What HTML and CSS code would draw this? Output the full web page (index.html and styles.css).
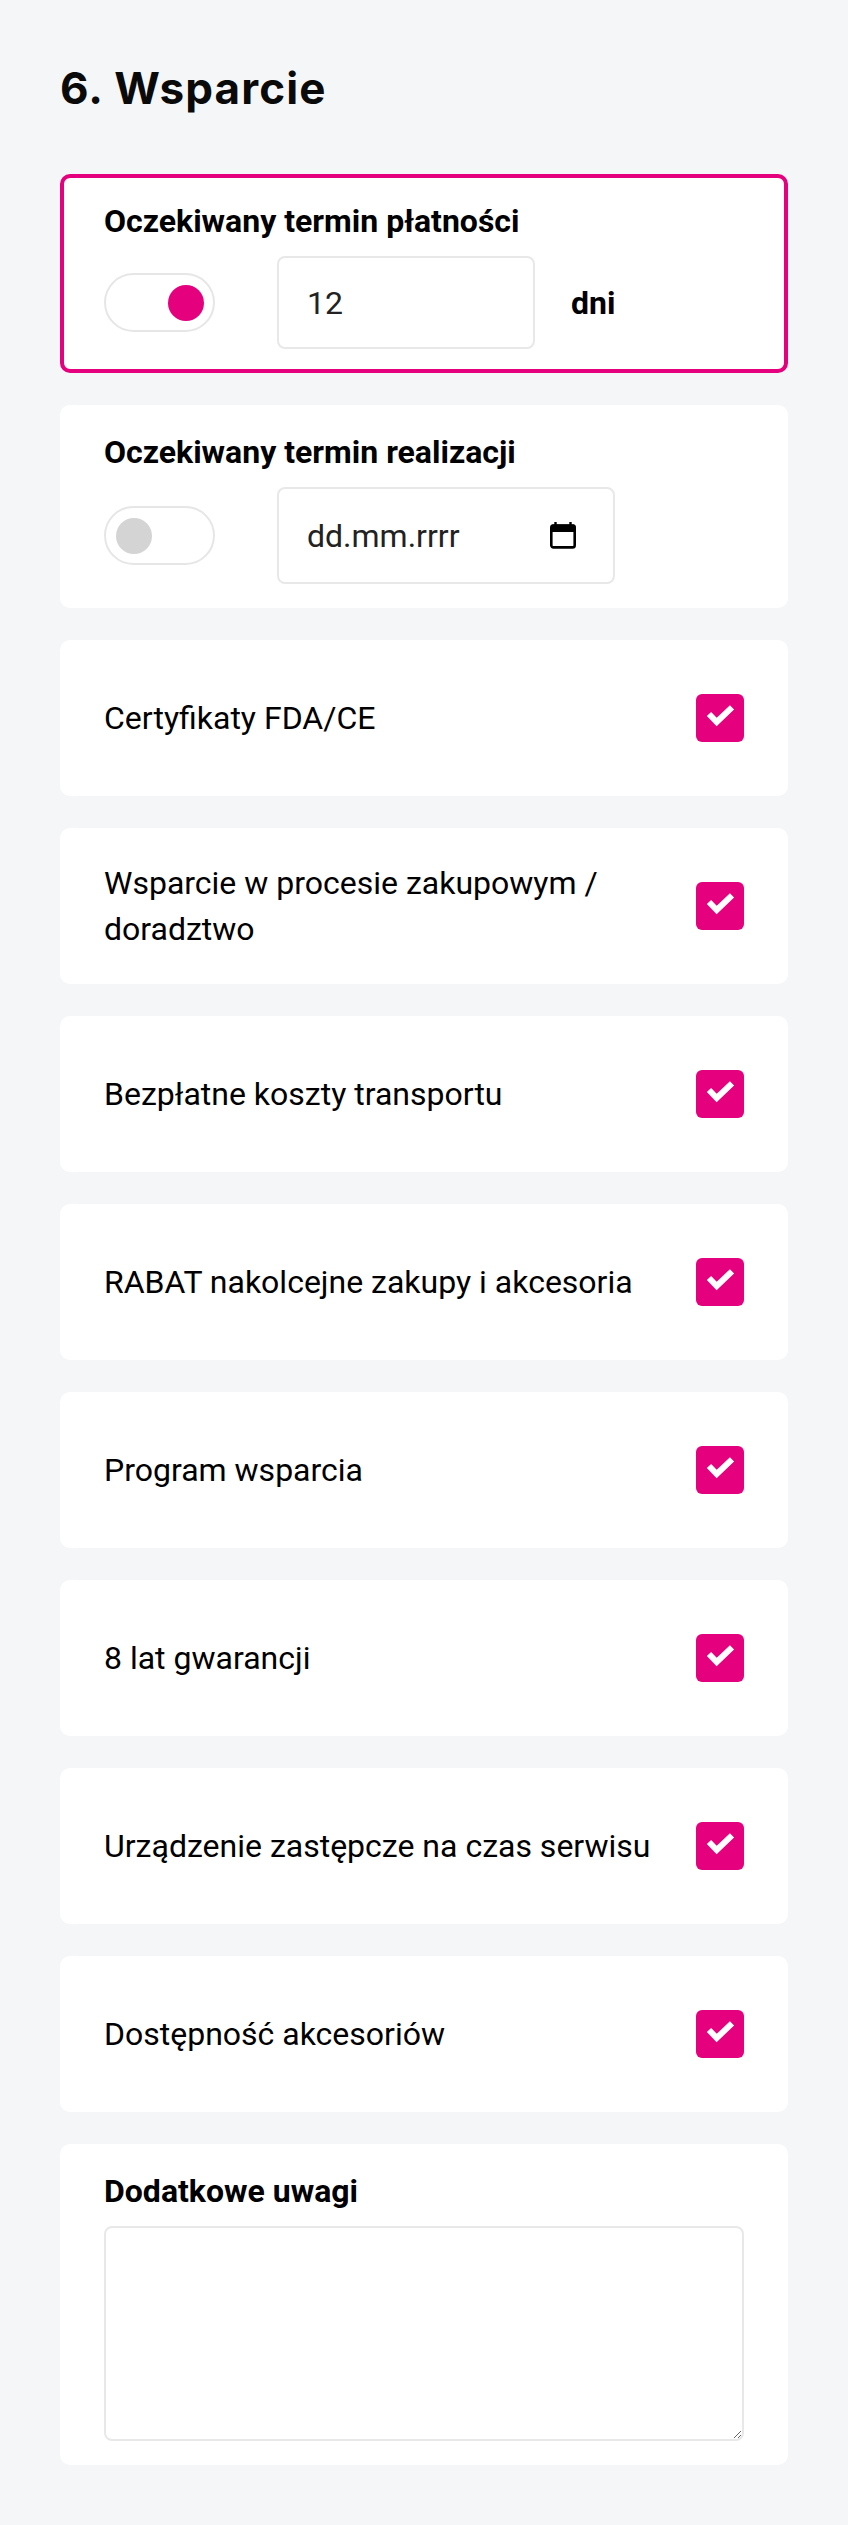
FILE: index.html
```html
<!DOCTYPE html>
<html lang="pl">
<head>
  <meta charset="UTF-8">
  <title>Wsparcie</title>
  <link rel="stylesheet" href="styles.css">
</head>
<body>
  <div class="page">
    <h1 class="section-title">6. Wsparcie</h1>

    <div class="cards">
      <!-- Payment term (active) -->
      <div class="card card-active">
        <p class="card-label">Oczekiwany termin płatności</p>
        <div class="card-row">
          <span class="switch switch-on"><span class="switch-knob"></span></span>
          <input class="field field-number" type="text" value="12">
          <span class="unit">dni</span>
        </div>
      </div>

      <!-- Delivery term -->
      <div class="card">
        <p class="card-label">Oczekiwany termin realizacji</p>
        <div class="card-row">
          <span class="switch"><span class="switch-knob"></span></span>
          <label class="field field-date">
            <input type="text" placeholder="dd.mm.rrrr">
            <svg class="calendar-icon" width="26" height="27" viewBox="0 0 26 27">
              <rect x="4.3" y="0" width="2.4" height="4" fill="#000"/>
              <rect x="19.3" y="0" width="2.4" height="4" fill="#000"/>
              <rect x="1.3" y="3.6" width="23.4" height="21.8" rx="2.2" fill="none" stroke="#000" stroke-width="2.6"/>
              <rect x="0.5" y="2.4" width="25" height="7.6" rx="1.5" fill="#000"/>
            </svg>
          </label>
        </div>
      </div>

      <label class="card check-card">
        <span class="check-text">Certyfikaty FDA/CE</span>
        <span class="check-box"><svg width="48" height="48" viewBox="0 0 48 48"><polyline points="13,20 20.7,28 36,13.3" fill="none" stroke="#fff" stroke-width="6"/></svg></span>
      </label>

      <label class="card check-card">
        <span class="check-text">Wsparcie w procesie zakupowym / doradztwo</span>
        <span class="check-box"><svg width="48" height="48" viewBox="0 0 48 48"><polyline points="13,20 20.7,28 36,13.3" fill="none" stroke="#fff" stroke-width="6"/></svg></span>
      </label>

      <label class="card check-card">
        <span class="check-text">Bezpłatne koszty transportu</span>
        <span class="check-box"><svg width="48" height="48" viewBox="0 0 48 48"><polyline points="13,20 20.7,28 36,13.3" fill="none" stroke="#fff" stroke-width="6"/></svg></span>
      </label>

      <label class="card check-card">
        <span class="check-text">RABAT nakolcejne zakupy i akcesoria</span>
        <span class="check-box"><svg width="48" height="48" viewBox="0 0 48 48"><polyline points="13,20 20.7,28 36,13.3" fill="none" stroke="#fff" stroke-width="6"/></svg></span>
      </label>

      <label class="card check-card">
        <span class="check-text">Program wsparcia</span>
        <span class="check-box"><svg width="48" height="48" viewBox="0 0 48 48"><polyline points="13,20 20.7,28 36,13.3" fill="none" stroke="#fff" stroke-width="6"/></svg></span>
      </label>

      <label class="card check-card">
        <span class="check-text">8 lat gwarancji</span>
        <span class="check-box"><svg width="48" height="48" viewBox="0 0 48 48"><polyline points="13,20 20.7,28 36,13.3" fill="none" stroke="#fff" stroke-width="6"/></svg></span>
      </label>

      <label class="card check-card">
        <span class="check-text">Urządzenie zastępcze na czas serwisu</span>
        <span class="check-box"><svg width="48" height="48" viewBox="0 0 48 48"><polyline points="13,20 20.7,28 36,13.3" fill="none" stroke="#fff" stroke-width="6"/></svg></span>
      </label>

      <label class="card check-card">
        <span class="check-text">Dostępność akcesoriów</span>
        <span class="check-box"><svg width="48" height="48" viewBox="0 0 48 48"><polyline points="13,20 20.7,28 36,13.3" fill="none" stroke="#fff" stroke-width="6"/></svg></span>
      </label>

      <!-- Notes -->
      <div class="card">
        <p class="card-label">Dodatkowe uwagi</p>
        <textarea class="notes"></textarea>
      </div>
    </div>
  </div>
</body>
</html>
```

FILE: styles.css
```css
body {
  margin: 0;
  background-color: #f5f6f8;
  font-family: Roboto, "Noto Sans", sans-serif;
  color: #000;
}

.page {
  padding: 61px 60px 58px;
}

.section-title {
  font-family: Inter, "Noto Sans", sans-serif;
  font-size: 44px;
  font-weight: 700;
  letter-spacing: 1.1px;
  margin: 0 0 59px;
  color: #0a0a0a;
}

.cards {
  display: flex;
  flex-direction: column;
  gap: 32px;
}

.card {
  background-color: #fff;
  border: 4px solid transparent;
  border-radius: 10px;
  padding: 24px 40px 20px;
}

.card-active {
  border-color: #e5007e;
}

.card-label {
  margin: 0 0 16px;
  font-size: 32px;
  line-height: 38px;
  font-weight: 700;
}

.card-row {
  display: flex;
  align-items: center;
}

/* Toggle */
.switch {
  display: flex;
  align-items: center;
  box-sizing: border-box;
  width: 111px;
  height: 59px;
  padding: 0 10px;
  border: 2px solid #e6e6e6;
  border-radius: 30px;
  margin-right: 62px;
}

.switch-knob {
  width: 36px;
  height: 36px;
  border-radius: 50%;
  background-color: #d4d4d4;
}

.switch-on {
  justify-content: flex-end;
  padding-right: 9px;
}

.switch-on .switch-knob {
  background-color: #e5007e;
}

/* Inputs */
.field {
  box-sizing: border-box;
  border: 2px solid #e8e8e8;
  border-radius: 8px;
  background-color: #fff;
  font-family: Roboto, sans-serif;
  font-size: 32px;
  color: #222;
  padding: 0 28px;
  outline: none;
}

.field-number {
  width: 258px;
  height: 93px;
}

.field-date {
  display: flex;
  align-items: center;
  width: 338px;
  height: 97px;
  padding-right: 37px;
}

.field-date input {
  flex: 1;
  min-width: 0;
  border: 0;
  padding: 0;
  outline: none;
  font: inherit;
  color: #222;
}

.field-date input::placeholder {
  color: #222;
  opacity: 1;
}

.calendar-icon {
  flex-shrink: 0;
}

.unit {
  margin-left: 36px;
  font-size: 32px;
  font-weight: 700;
}

/* Checkbox rows */
.check-card {
  display: flex;
  align-items: center;
  justify-content: space-between;
  gap: 24px;
  box-sizing: border-box;
  min-height: 156px;
  padding: 26px 40px;
  font-size: 32px;
  line-height: 1.45;
}

.check-box {
  flex-shrink: 0;
  display: flex;
  width: 48px;
  height: 48px;
  border-radius: 6px;
  background-color: #e5007e;
}

.notes {
  display: block;
  box-sizing: border-box;
  width: 100%;
  height: 215px;
  border: 2px solid #e8e8e8;
  border-radius: 8px;
  font-family: Roboto, sans-serif;
  font-size: 32px;
  padding: 16px 24px;
  outline: none;
  resize: vertical;
}
```
